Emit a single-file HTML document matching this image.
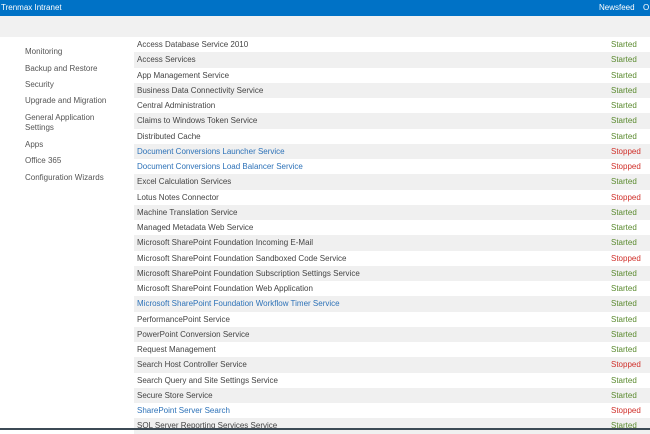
<!DOCTYPE html>
<html><head><style>
body{margin:0;width:650px;height:430px;overflow:hidden;background:#fff;font-family:"Liberation Sans",sans-serif;font-size:8px;color:#444;position:relative}
.top{position:absolute;left:0;top:0;width:650px;height:16px;background:#0072c6;color:#fff;z-index:3}
.top span{position:absolute;top:3px;font-size:8px}
.strip{position:absolute;left:0;top:16px;width:650px;height:21px;background:#f1f1f1;z-index:2}
.nav{position:absolute;left:25px;color:#555;font-size:8px;line-height:10px}
.tbl{position:absolute;left:134px;top:37px;width:516px}
.r{height:15.25px;line-height:15.25px;position:relative;padding-left:3px}
.r:nth-child(even){background:#f0f0f0}
.r b{font-weight:normal;position:absolute;left:477px;color:#5a8a2e}
.r b.s{color:#d0302a}
.r.l{color:#2d72b8}
.bot{position:absolute;left:0;top:428px;width:650px;height:2px;background:#3c4a55}
</style></head><body>
<div class="top"><span style="left:1px">Trenmax Intranet</span><span style="left:599px">Newsfeed</span><span style="left:643px">O</span></div>
<div class="strip"></div>
<div class="nav" style="top:28px">System Settings</div>
<div class="nav" style="top:47px">Monitoring</div>
<div class="nav" style="top:64px">Backup and Restore</div>
<div class="nav" style="top:80px">Security</div>
<div class="nav" style="top:96px">Upgrade and Migration</div>
<div class="nav" style="top:113px">General Application<br>Settings</div>
<div class="nav" style="top:140px">Apps</div>
<div class="nav" style="top:156px">Office 365</div>
<div class="nav" style="top:173px">Configuration Wizards</div>
<div class="tbl">
<div class="r">Access Database Service 2010<b>Started</b></div>
<div class="r">Access Services<b>Started</b></div>
<div class="r">App Management Service<b>Started</b></div>
<div class="r">Business Data Connectivity Service<b>Started</b></div>
<div class="r">Central Administration<b>Started</b></div>
<div class="r">Claims to Windows Token Service<b>Started</b></div>
<div class="r">Distributed Cache<b>Started</b></div>
<div class="r l">Document Conversions Launcher Service<b class="s">Stopped</b></div>
<div class="r l">Document Conversions Load Balancer Service<b class="s">Stopped</b></div>
<div class="r">Excel Calculation Services<b>Started</b></div>
<div class="r">Lotus Notes Connector<b class="s">Stopped</b></div>
<div class="r">Machine Translation Service<b>Started</b></div>
<div class="r">Managed Metadata Web Service<b>Started</b></div>
<div class="r">Microsoft SharePoint Foundation Incoming E-Mail<b>Started</b></div>
<div class="r">Microsoft SharePoint Foundation Sandboxed Code Service<b class="s">Stopped</b></div>
<div class="r">Microsoft SharePoint Foundation Subscription Settings Service<b>Started</b></div>
<div class="r">Microsoft SharePoint Foundation Web Application<b>Started</b></div>
<div class="r l">Microsoft SharePoint Foundation Workflow Timer Service<b>Started</b></div>
<div class="r">PerformancePoint Service<b>Started</b></div>
<div class="r">PowerPoint Conversion Service<b>Started</b></div>
<div class="r">Request Management<b>Started</b></div>
<div class="r">Search Host Controller Service<b class="s">Stopped</b></div>
<div class="r">Search Query and Site Settings Service<b>Started</b></div>
<div class="r">Secure Store Service<b>Started</b></div>
<div class="r l">SharePoint Server Search<b class="s">Stopped</b></div>
<div class="r">SQL Server Reporting Services Service<b>Started</b></div>
</div>
<div class="bot"></div>
</body></html>
